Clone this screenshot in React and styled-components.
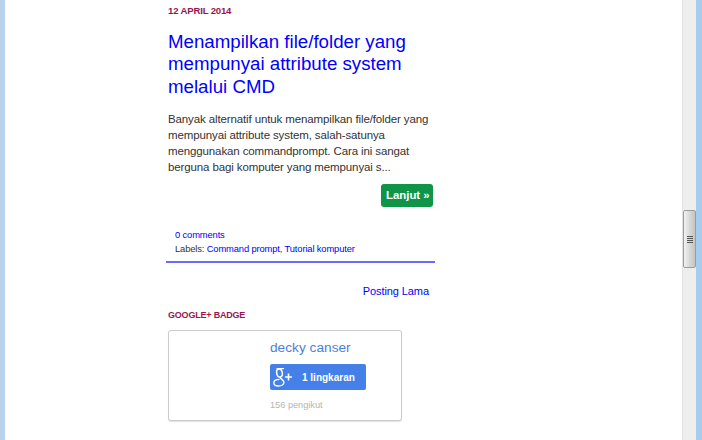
import React from 'react';
import styled, { createGlobalStyle } from 'styled-components';

const GlobalStyle = createGlobalStyle`
  html, body {
    margin: 0;
    padding: 0;
    height: 440px;
    overflow: hidden;
    background: #fff;
  }
`;

const Frame = styled.div`
  display: flex;
  width: 702px;
  height: 440px;
  overflow: hidden;
  font-family: "Liberation Sans", Arial, sans-serif;
  background: #fff;
`;

const SideBand = styled.div`
  flex: none;
  width: ${props => props.$width}px;
  background: ${props => props.$color};
`;

const Page = styled.main`
  flex: 1;
  padding: 4px 0 0 161px;
`;

const Column = styled.div`
  width: 269px;
`;

const DateHeader = styled.h2`
  margin: 0 0 0 2px;
  font-size: 9.6px;
  line-height: 13px;
  letter-spacing: -0.18px;
  font-weight: bold;
  text-transform: uppercase;
  color: #99164f;
`;

const PostTitle = styled.h3`
  margin: 14px 0 0 2px;
  font-size: 18.7px;
  line-height: 22.4px;
  font-weight: normal;
  color: #0000ff;
`;

const Snippet = styled.p`
  margin: 13px 0 0 2px;
  width: 264px;
  font-size: 11.5px;
  line-height: 16px;
  letter-spacing: -0.12px;
  color: #333;
`;

const MoreRow = styled.div`
  display: flex;
  justify-content: flex-end;
  margin: 9px 2px 0 0;
`;

const MoreButton = styled.a`
  display: block;
  width: 52px;
  height: 23px;
  box-sizing: border-box;
  padding-left: 5px;
  line-height: 23px;
  white-space: nowrap;
  border-radius: 3px;
  background: #0e9548;
  color: #fff;
  font-size: 11.4px;
  font-weight: bold;
`;

const PostFooter = styled.div`
  margin-top: 21px;
  padding: 0 0 5px 9px;
  border-bottom: 2px solid #6a6aff;
  font-size: 9.4px;
  line-height: 14px;
  letter-spacing: -0.14px;
  color: #333;
`;

const FooterLink = styled.a`
  color: #0000ff;
`;

const Pager = styled.div`
  margin: 21px 6px 0 0;
  text-align: right;
  font-size: 11px;
  line-height: 14px;
  letter-spacing: -0.08px;
  color: #0000ff;
`;

const WidgetTitle = styled.h2`
  margin: 11px 0 0 2px;
  font-size: 9px;
  line-height: 13px;
  letter-spacing: -0.2px;
  font-weight: bold;
  text-transform: uppercase;
  color: #99164f;
`;

const Badge = styled.div`
  box-sizing: border-box;
  width: 234px;
  height: 91px;
  margin: 8px 0 0 2px;
  padding: 8px 0 0 101px;
  background: #fff;
  border: 1px solid #ccc;
  border-radius: 3px;
  box-shadow: 0 1px 1px rgba(0, 0, 0, 0.12);
`;

const BadgeName = styled.div`
  font-size: 13.7px;
  line-height: 18px;
  color: #4d7fdc;
`;

const FollowButton = styled.div`
  display: flex;
  align-items: center;
  width: 96px;
  height: 26px;
  margin-top: 7px;
  border-radius: 2px;
  background: #4480e8;
  color: #fff;
  font-size: 10px;
  font-weight: bold;

  svg {
    flex: none;
    margin-right: 6px;
  }
`;

const Followers = styled.div`
  margin-top: 9px;
  font-size: 9.2px;
  line-height: 12px;
  color: #b3b3b3;
`;

const ScrollTrack = styled.div`
  flex: none;
  box-sizing: border-box;
  width: 14px;
  padding-top: 210px;
  background: #eeeeee;
  border-left: 1px solid #e2e2e2;
`;

const ScrollThumb = styled.div`
  display: flex;
  flex-direction: column;
  align-items: center;
  justify-content: center;
  gap: 1px;
  box-sizing: border-box;
  width: 13px;
  height: 58px;
  border: 1px solid #9c9c9c;
  border-radius: 2px;
  background: linear-gradient(to right, #f2f2f2, #d6d6d6 55%, #c4c4c4);
`;

const Grip = styled.span`
  width: 6px;
  height: 1px;
  background: #555;
`;

const PlusMark = () => (
  <svg width="26" height="26" viewBox="0 0 26 26" fill="none" stroke="#fff" aria-hidden="true">
    <ellipse cx="9.5" cy="9" rx="2.8" ry="4" strokeWidth="1.5" transform="rotate(-12 9.5 9)" />
    <path d="M6.5 4.6h7.5" strokeWidth="1.2" />
    <path d="M10.5 13c-1.2 1.4 3.4 2.6 3.4 5.2 0 2.4-2.6 3.8-5.3 3.8-2.7 0-4.8-1.2-4.8-3.2 0-2.4 3-3.4 5.8-3.4" strokeWidth="1.4" />
    <path d="M18.5 9.5v7M15 13h7" strokeWidth="1.6" />
  </svg>
);

const App = () => (
  <>
    <GlobalStyle />
    <Frame>
      <SideBand $width={5} $color="#b9d3ee" />
      <Page>
        <Column>
          <DateHeader>12 April 2014</DateHeader>
          <PostTitle>Menampilkan file/folder yang mempunyai attribute system melalui CMD</PostTitle>
          <Snippet>
            Banyak alternatif untuk menampilkan file/folder yang mempunyai attribute system,
            salah-satunya menggunakan commandprompt. Cara ini sangat berguna bagi komputer yang
            mempunyai s...
          </Snippet>
          <MoreRow>
            <MoreButton>Lanjut »</MoreButton>
          </MoreRow>
          <PostFooter>
            <div><FooterLink>0 comments</FooterLink></div>
            <div>Labels: <FooterLink>Command prompt</FooterLink>, <FooterLink>Tutorial komputer</FooterLink></div>
          </PostFooter>
          <Pager>Posting Lama</Pager>
          <WidgetTitle>Google+ Badge</WidgetTitle>
          <Badge>
            <BadgeName>decky canser</BadgeName>
            <FollowButton>
              <PlusMark />
              1 lingkaran
            </FollowButton>
            <Followers>156 pengikut</Followers>
          </Badge>
        </Column>
      </Page>
      <ScrollTrack>
        <ScrollThumb>
          <Grip />
          <Grip />
          <Grip />
          <Grip />
        </ScrollThumb>
      </ScrollTrack>
      <SideBand $width={6} $color="#a6cdee" />
    </Frame>
  </>
);

export default App;
